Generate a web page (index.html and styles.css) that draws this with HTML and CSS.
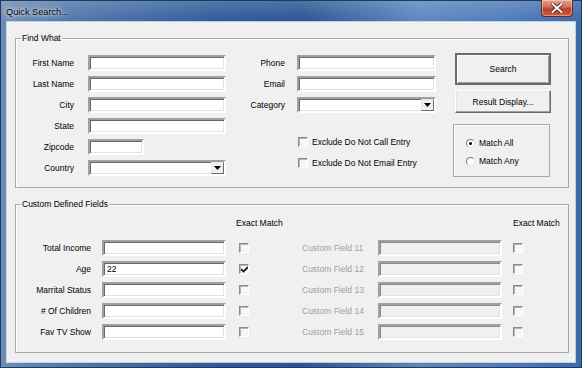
FILE: index.html
```html
<!DOCTYPE html>
<html lang="en">

<head>
    <meta charset="utf-8">
    <title>Quick Search...</title>
    <link rel="stylesheet" href="styles.css">
</head>

<body>

    <div class="window">

        <!-- TITLE BAR -->
        <div class="titlebar">
            <span class="title">Quick Search...</span>
            <button class="close" title="Close">
                <svg width="12" height="10" viewBox="0 0 12 10">
                    <path d="M1.5 1 L10.5 9 M10.5 1 L1.5 9" stroke="#3a1a14" stroke-width="3.6" stroke-linecap="square" />
                    <path d="M1.5 1 L10.5 9 M10.5 1 L1.5 9" stroke="#fff" stroke-width="2" stroke-linecap="square" />
                </svg>
            </button>
        </div>

        <div class="client">

            <!-- FIND WHAT -->
            <section class="group find">
                <span class="group-title">Find What</span>
                <div class="find-body">

                    <div class="field-grid left">
                        <label>First Name</label><input class="text" type="text">
                        <label>Last Name</label><input class="text" type="text">
                        <label>City</label><input class="text" type="text">
                        <label>State</label><input class="text" type="text">
                        <label>Zipcode</label><input class="text zip" type="text">
                        <label>Country</label>
                        <div class="combo"><span class="combo-btn"><svg width="7" height="4" viewBox="0 0 7 4"><path d="M0 0 H7 L3.5 4 Z" fill="#000" /></svg></span></div>
                    </div>

                    <div class="middle">
                        <div class="field-grid mid">
                            <label>Phone</label><input class="text" type="text">
                            <label>Email</label><input class="text" type="text">
                            <label>Category</label>
                            <div class="combo"><span class="combo-btn"><svg width="7" height="4" viewBox="0 0 7 4"><path d="M0 0 H7 L3.5 4 Z" fill="#000" /></svg></span></div>
                        </div>
                        <div class="check-list">
                            <div class="check-row"><span class="check"></span>Exclude Do Not Call Entry</div>
                            <div class="check-row"><span class="check"></span>Exclude Do Not Email Entry</div>
                        </div>
                    </div>

                    <div class="actions">
                        <button class="btn default search">Search</button>
                        <button class="btn result">Result Display...</button>
                        <div class="radio-box">
                            <div class="radio-row"><span class="radio on"></span>Match All</div>
                            <div class="radio-row"><span class="radio"></span>Match Any</div>
                        </div>
                    </div>

                </div>
            </section>

            <!-- CUSTOM DEFINED FIELDS -->
            <section class="group custom">
                <span class="group-title">Custom Defined Fields</span>

                <div class="custom-cols custom-head">
                    <span></span><span></span>
                    <span class="exact">Exact Match</span>
                    <span></span><span></span>
                    <span class="exact right">Exact Match</span>
                </div>

                <div class="custom-cols custom-rows">
                    <label>Total Income</label><input class="text" type="text"><span class="check"></span>
                    <label class="off">Custom Field 11</label><input class="text disabled" type="text" disabled><span class="check"></span>

                    <label>Age</label><input class="text" type="text" value="22"><span class="check"><svg width="7" height="7" viewBox="0 0 7 7"><path d="M0 3 L2.5 5.5 L7 1" fill="none" stroke="#000" stroke-width="1.6" /></svg></span>
                    <label class="off">Custom Field 12</label><input class="text disabled" type="text" disabled><span class="check"></span>

                    <label>Marrital Status</label><input class="text" type="text"><span class="check"></span>
                    <label class="off">Custom Field 13</label><input class="text disabled" type="text" disabled><span class="check"></span>

                    <label># Of Children</label><input class="text" type="text"><span class="check"></span>
                    <label class="off">Custom Field 14</label><input class="text disabled" type="text" disabled><span class="check"></span>

                    <label>Fav TV Show</label><input class="text" type="text"><span class="check"></span>
                    <label class="off">Custom Field 15</label><input class="text disabled" type="text" disabled><span class="check"></span>
                </div>
            </section>

        </div>
    </div>

</body>

</html>
```

FILE: styles.css
```css
* {
    box-sizing: border-box;
}

body {
    margin: 0;
    font-family: "Liberation Sans", Arial, sans-serif;
    font-size: 8.5px;
    color: #000;
    background: #2f5c99;
}

/* Khung cửa sổ */
.window {
    width: 582px;
    height: 368px;
    display: flex;
    flex-direction: column;
    background:
        linear-gradient(to bottom, rgba(255, 255, 255, 0.18), rgba(255, 255, 255, 0) 22px),
        linear-gradient(to right, #6f8db6 0%, #4f77ab 12%, #2e5a97 38%, #2a5592 52%, #5d87bd 72%, #4c7bb8 88%, #3b6aa8 100%);
    box-shadow: inset 0 0 0 1px #1d3a63;
}

.titlebar {
    height: 22px;
    display: flex;
    justify-content: space-between;
    align-items: flex-start;
}

.title {
    padding-left: 6px;
    line-height: 24px;
    font-size: 9.2px;
    color: #000;
    text-shadow: 0 0 6px rgba(255, 255, 255, 0.9), 0 0 3px rgba(255, 255, 255, 0.9);
}

.close {
    width: 32px;
    height: 17px;
    margin-right: 9px;
    padding: 0;
    border: 1px solid #6b2a20;
    border-top: none;
    border-radius: 0 0 4px 4px;
    background: linear-gradient(to bottom, #e4a290 0%, #d37563 40%, #c0412b 55%, #c95a3c 100%);
    box-shadow: inset 0 0 0 1px rgba(255, 255, 255, 0.35);
    display: flex;
    align-items: center;
    justify-content: center;
}

/* Vùng nội dung */
.client {
    flex: 1;
    margin: 0 7px 6px 7px;
    background: #f0f0f0;
    box-shadow: 0 0 0 1px rgba(220, 232, 245, 0.8);
    overflow: hidden;
}

.group {
    position: relative;
    border: 1px solid #a8a8a8;
    box-shadow: inset 1px 1px 0 #fff;
    margin: 0 6px 0 8px;
}

.group.find {
    margin-top: 16px;
    height: 150px;
}

.group.custom {
    margin-top: 16px;
    height: 149px;
}

.group-title {
    position: absolute;
    top: -7px;
    left: 5px;
    padding: 0 1px;
    line-height: 12px;
    background: #f0f0f0;
}

/* Ô nhập liệu kiểu cổ điển */
.text {
    display: block;
    height: 16px;
    margin: 0;
    padding: 0 0 0 3px;
    font: inherit;
    background: #fff;
    border: 2px solid;
    border-color: #a0a0a0 #fff #fff #a0a0a0;
    box-shadow: inset 1px 1px 0 #696969, inset -1px -1px 0 #e3e3e3;
    outline: none;
}

.text.disabled {
    background: #f0f0f0;
    box-shadow: inset 1px 1px 0 #8a8a8a, inset -1px -1px 0 #e3e3e3;
}

.combo {
    height: 16px;
    display: flex;
    justify-content: flex-end;
    background: #fff;
    border: 2px solid;
    border-color: #a0a0a0 #fff #fff #a0a0a0;
    box-shadow: inset 1px 1px 0 #696969, inset -1px -1px 0 #e3e3e3;
}

.combo-btn {
    width: 13px;
    height: 12px;
    background: #f0f0f0;
    border: 1px solid;
    border-color: #e3e3e3 #696969 #696969 #e3e3e3;
    display: flex;
    align-items: center;
    justify-content: center;
}

/* Find What */
.find-body {
    display: flex;
    align-items: flex-start;
}

.field-grid {
    display: grid;
    grid-auto-rows: 16px;
    row-gap: 5px;
    column-gap: 14px;
    margin-top: 16px;
}

.field-grid label {
    text-align: right;
    line-height: 16px;
    white-space: nowrap;
}

.field-grid.left {
    grid-template-columns: 58px 138px;
}

.text.zip {
    width: 56px;
}

.middle {
    margin-left: 9px;
}

.field-grid.mid {
    grid-template-columns: 50px 139px;
    column-gap: 12px;
}

.check-list {
    margin: 24px 0 0 63px;
    display: flex;
    flex-direction: column;
    gap: 11px;
}

.check-row {
    display: flex;
    align-items: center;
    gap: 4px;
    height: 10px;
    white-space: nowrap;
}

.check {
    width: 10px;
    height: 10px;
    flex: none;
    background: #f7f7f7;
    border: 1px solid;
    border-color: #8a8a8a #fff #fff #8a8a8a;
    box-shadow: inset 1px 1px 0 #b5b5b5;
    display: flex;
    align-items: center;
    justify-content: center;
}

.actions {
    margin: 14px 0 0 17px;
    width: 97px;
}

.btn {
    display: block;
    width: 96px;
    margin: 0 0 0 2px;
    padding: 0;
    font: inherit;
    color: #000;
    background: #f0f0f0;
    border: 1px solid;
    border-color: #fff #696969 #696969 #fff;
    box-shadow: inset -1px -1px 0 #a0a0a0, inset 1px 1px 0 #e3e3e3;
}

.btn.search {
    height: 32px;
    border: 2px solid #6a6a6a;
    box-shadow: inset 1px 1px 0 #fff, inset -1px -1px 0 #a0a0a0;
}

.btn.result {
    height: 23px;
    margin-top: 5px;
}

.radio-box {
    margin-top: 11px;
    height: 53px;
    border: 1px solid #a8a8a8;
    box-shadow: inset 1px 1px 0 #fff;
    padding: 13px 0 0 12px;
    display: flex;
    flex-direction: column;
    gap: 8px;
}

.radio-row {
    display: flex;
    align-items: center;
    gap: 4px;
    height: 10px;
}

.radio {
    width: 9px;
    height: 9px;
    border-radius: 50%;
    background: #fff;
    border: 1px solid;
    border-color: #7a7a7a #e3e3e3 #e3e3e3 #7a7a7a;
    display: flex;
    align-items: center;
    justify-content: center;
}

.radio.on::after {
    content: "";
    width: 3px;
    height: 3px;
    border-radius: 50%;
    background: #000;
}

/* Custom Defined Fields */
.custom-cols {
    display: grid;
    grid-template-columns: 75px 135px 76px 76px 135px 1fr;
}

.custom-head {
    margin-top: 12px;
    height: 23px;
    line-height: 12px;
}

.exact {
    padding-left: 10px;
    white-space: nowrap;
}

.exact.right {
    padding-left: 0;
}

.custom-rows {
    grid-auto-rows: 16px;
    row-gap: 5px;
    align-items: center;
}

.custom-rows label {
    text-align: right;
    line-height: 16px;
    white-space: nowrap;
}

.custom-rows label.off {
    text-align: left;
    color: #a0a0a0;
}

.custom-rows .text {
    width: 124px;
    justify-self: end;
}

.custom-rows .text.disabled {
    justify-self: start;
}

.custom-rows .check:nth-child(3n) {
    margin-left: 13px;
}

.custom-rows .check:nth-child(6n) {
    margin-left: 0;
}
```
